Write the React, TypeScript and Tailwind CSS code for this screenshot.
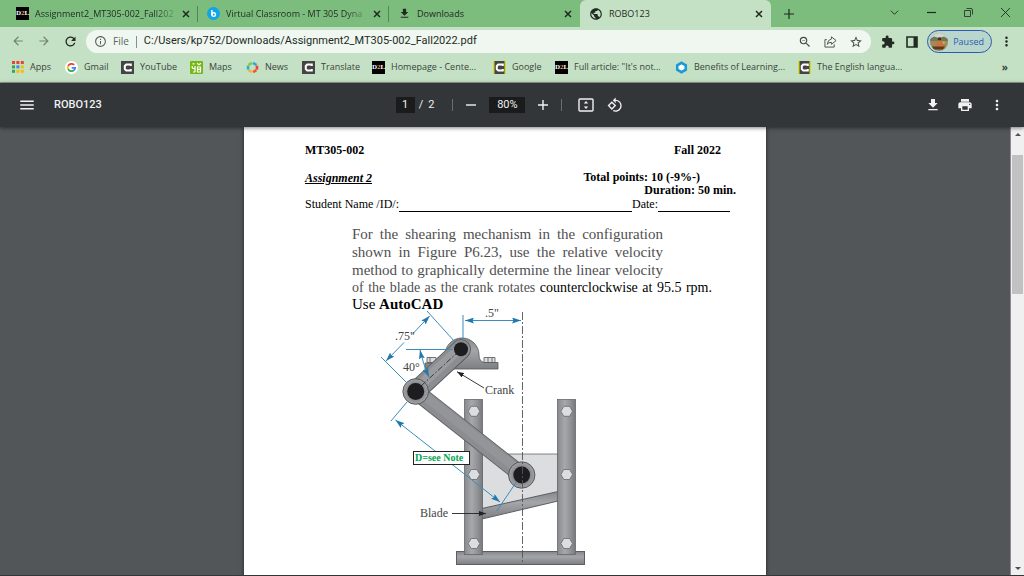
import type { ReactNode } from 'react'
import {
  MdArrowBack,
  MdArrowForward,
  MdInfoOutline,
  MdMenu,
  MdMoreVert,
  MdPrint,
  MdPublic,
  MdRefresh,
  MdRotate90DegreesCcw,
  MdStarBorder,
  MdZoomOut,
} from 'react-icons/md'

const DOWNLOAD_PATH = 'M19 9h-4V3H9v6H5l7 7 7-7zM5 18v2h14v-2H5z'
const EXTENSION_PATH =
  'M20.5 11H19V7c0-1.1-.9-2-2-2h-4V3.5a2.5 2.5 0 0 0-5 0V5H4c-1.1 0-2 .9-2 2v3.8h1.5a2.7 2.7 0 0 1 0 5.4H2V20c0 1.1.9 2 2 2h3.8v-1.5a2.7 2.7 0 0 1 5.4 0V22H17c1.1 0 2-.9 2-2v-4h1.5a2.5 2.5 0 0 0 0-5z'

function DownloadIcon({ className }: { className: string }) {
  return (
    <svg viewBox="0 0 24 24" fill="currentColor" className={className}>
      <path d={DOWNLOAD_PATH} />
    </svg>
  )
}

function D2LIcon() {
  return (
    <span className="flex size-[13px] shrink-0 items-center justify-center bg-black font-['Liberation_Serif',serif] text-[7px] leading-none font-bold text-white">
      D<span className="text-[#f2a25c]">2</span>L
    </span>
  )
}

function CIcon({ accent = false }: { accent?: boolean }) {
  return (
    <svg viewBox="0 0 13 13" className="size-[13px] shrink-0">
      <rect width="13" height="13" fill={accent ? '#d6dc2c' : '#444'} />
      <rect x={accent ? 1.5 : 0} width={accent ? 10 : 13} height="13" fill="#444" />
      <path d="M9.8 5V3.5H5.3L3.8 5v3l1.5 1.6h4.5V8" fill="none" stroke="#fff" strokeWidth="2" />
    </svg>
  )
}

function AppsIcon() {
  const colors = ['#e94335', '#e94335', '#e94335', '#34a853', '#4285f4', '#fbbc05', '#34a853', '#fbbc05', '#fbbc05']
  return (
    <svg viewBox="0 0 12 12" className="size-3 shrink-0">
      {colors.map((c, i) => (
        <rect key={i} x={(i % 3) * 4.4} y={Math.floor(i / 3) * 4.4} width="3" height="3" fill={c} />
      ))}
    </svg>
  )
}

function GoogleIcon() {
  return (
    <svg viewBox="0 0 14 14" className="size-[13px] shrink-0">
      <circle cx="7" cy="7" r="7" fill="#fff" />
      <g fill="none" strokeWidth="1.9">
        <path d="M9.9 4.2A4 4 0 0 0 3.4 5.3" stroke="#ea4335" />
        <path d="M3.4 5.3a4 4 0 0 0 0 3.4" stroke="#fbbc05" />
        <path d="M3.4 8.7a4 4 0 0 0 6.2 1.3" stroke="#34a853" />
        <path d="M9.6 10A4 4 0 0 0 11 7.3H7.2" stroke="#4285f4" />
      </g>
    </svg>
  )
}

function MapsIcon() {
  return (
    <svg viewBox="0 0 13 13" className="size-[13px] shrink-0">
      <rect width="13" height="13" rx="1" fill="#74b816" />
      <g fill="none" stroke="#fff" strokeWidth="1.2">
        <path d="M2.2 5v1.5q0 1 1.300 1H5V5M5 7.500V11M3 11h2" />
        <path d="M7.500 6h3v5h-3zM7.500 8.300h3" />
        <path d="M2.500 2.800h2M7 2.300l2 1.500 2-1.500" />
      </g>
    </svg>
  )
}

function NewsIcon() {
  return (
    <svg viewBox="0 0 14 14" className="size-[13px] shrink-0">
      <g fill="none" strokeWidth="2.8">
        <path d="M2.6 4.3 6.4 2" stroke="#8bc53f" />
        <path d="M7.6 2l3.8 2.3" stroke="#2aa9e0" />
        <path d="M11.8 5v4.3" stroke="#ef4136" />
        <path d="M11.2 9.8 7.6 12" stroke="#f15a29" />
        <path d="M6.4 12 2.6 9.8" stroke="#fbb040" />
        <path d="M2.2 9.3V5" stroke="#27b3c9" />
      </g>
    </svg>
  )
}

function BenefitsIcon() {
  return (
    <svg viewBox="0 0 14 14" className="size-[13px] shrink-0">
      <path d="M7 2 11.6 4.6v4.8L7 12 2.4 9.4V4.6z" fill="#fff" stroke="#1c9ad6" strokeWidth="2.8" />
    </svg>
  )
}

function BrightspaceIcon() {
  return (
    <svg viewBox="0 0 13 13" className="size-[13px] shrink-0">
      <circle cx="6.5" cy="6.5" r="6.5" fill="#0ea5e9" />
      <path d="M4.9 3v5.2" stroke="#fff" strokeWidth="1.5" />
      <circle cx="6.7" cy="7.6" r="1.8" fill="none" stroke="#fff" strokeWidth="1.4" />
    </svg>
  )
}

function Avatar() {
  return (
    <svg viewBox="0 0 18 18" className="size-[18px] shrink-0">
      <defs>
        <clipPath id="avatar">
          <circle cx="9" cy="9" r="9" />
        </clipPath>
      </defs>
      <g clipPath="url(#avatar)">
        <rect width="18" height="18" fill="#a08a5c" />
        <rect width="18" height="5" fill="#d3d8d3" />
        <path d="M0 6 4 3.5 9 5l5-1.500 4 2.500v2H0z" fill="#6d7a58" />
        <circle cx="9.500" cy="6" r="1.800" fill="#4a2c1c" />
        <path d="M8 7.500h3.500l1 3 2.500 2-2 1.500H5l1-3z" fill="#c8743a" />
        <path d="M2 13.500h13l-2 3H4z" fill="#5c3a22" />
        <path d="m12.500 8.500 3 1-2 1.500z" fill="#e6b45c" />
      </g>
    </svg>
  )
}

type TabProps = { icon: ReactNode; title: string; active?: boolean; divider?: boolean }

function Tab({ icon, title, active, divider }: TabProps) {
  return (
    <div
      className={`flex h-full w-[191px] items-center gap-[6px] pr-[7px] pl-[9px] ${
        active ? 'rounded-t-md bg-[#c5e1c5]' : ''
      }`}
    >
      {icon}
      <span
        className={`flex-1 whitespace-nowrap ${
          divider ? '[mask-image:linear-gradient(to_right,black_85%,rgba(0,0,0,0.2))]' : ''
        }`}
      >
        {title}
      </span>
      <button aria-label={`Close ${title}`} className="flex">
        <svg viewBox="0 0 10 10" className="size-[10px]" stroke="currentColor" strokeWidth="1.5">
          <path d="m2 2 6 6M8 2 2 8" />
        </svg>
      </button>
      {divider && <span className="-mr-[7px] h-4 w-px bg-[#4e8a50]" />}
    </div>
  )
}

function TabStrip() {
  return (
    <div className="flex h-[27px] items-center bg-[#7cbc7d] pl-[7px] text-[9px] text-[#1f2a20]">
      <Tab icon={<D2LIcon />} title="Assignment2_MT305-002_Fall202" divider />
      <Tab icon={<BrightspaceIcon />} title="Virtual Classroom - MT 305 Dyna" divider />
      <Tab icon={<DownloadIcon className="size-[13px] shrink-0" />} title="Downloads" />
      <Tab icon={<MdPublic className="size-[14px] shrink-0" />} title="ROBO123" active />
      <button aria-label="New tab" className="ml-[6px] flex size-6 items-center justify-center">
        <svg viewBox="0 0 10 10" className="size-[10px]" stroke="currentColor" strokeWidth="1.2">
          <path d="M5 0v10M0 5h10" />
        </svg>
      </button>
      <div className="mb-[3px] ml-auto flex">
        <button aria-label="Search tabs" className="flex w-[37px] justify-center">
          <svg viewBox="0 0 10 10" className="size-[9px]" fill="none" stroke="currentColor">
            <path d="m1 3 4 4 4-4" />
          </svg>
        </button>
        <button aria-label="Minimize" className="flex w-[37px] justify-center">
          <svg viewBox="0 0 9 9" className="size-[9px]" stroke="currentColor" strokeWidth="1.2">
            <path d="M0 4.5h9" />
          </svg>
        </button>
        <button aria-label="Restore" className="flex w-[37px] justify-center">
          <svg viewBox="0 0 9 9" className="size-[9px]" fill="none" stroke="currentColor" strokeWidth=".8">
            <path d="M.5 2.5h6v6h-6zM2.5.5h4.5q1.5 0 1.5 1.5v4.5" />
          </svg>
        </button>
        <button aria-label="Close window" className="flex w-[37px] justify-center">
          <svg viewBox="0 0 9 9" className="size-[9px]" stroke="currentColor" strokeWidth=".9">
            <path d="m0 0 9 9M9 0 0 9" />
          </svg>
        </button>
      </div>
    </div>
  )
}

function AddressBar() {
  return (
    <div className="flex h-[29px] items-center bg-[#c5e1c5] pr-[10px] pl-[11px] text-[#222b23]">
      <div className="flex gap-3">
        <button aria-label="Back" className="flex text-[#73866f]">
          <MdArrowBack className="size-[14px]" />
        </button>
        <button aria-label="Forward" className="flex text-[#73866f]">
          <MdArrowForward className="size-[14px]" />
        </button>
        <button aria-label="Reload" className="flex">
          <MdRefresh className="size-[15px]" />
        </button>
      </div>
      <div className="ml-2 flex h-[23px] flex-1 items-center rounded-full bg-[#f0f7f0] px-2">
        <MdInfoOutline className="size-[13px] text-[#5c665d]" />
        <span className="ml-[6px] text-[10px] text-[#5c665d]">File</span>
        <span className="mx-[7px] h-3 w-px bg-[#87918a]" />
        <input
          aria-label="Address"
          defaultValue="C:/Users/kp752/Downloads/Assignment2_MT305-002_Fall2022.pdf"
          className="min-w-0 flex-1 bg-transparent font-['Roboto',sans-serif] text-[11px] outline-none"
        />
        <div className="flex items-center gap-3 text-[#434c44]">
          <button aria-label="Zoom" className="flex">
            <MdZoomOut className="size-[14px]" />
          </button>
          <button aria-label="Share" className="flex">
            <svg viewBox="0 0 14 14" className="size-[13px]" fill="none" stroke="currentColor" strokeWidth="1">
              <path d="M3 5H1v8h10v-3M8 2l5 4-5 4V8Q5 7.5 3.5 10 4 5 8 4.3z" />
            </svg>
          </button>
          <button aria-label="Bookmark" className="flex">
            <MdStarBorder className="size-[14px]" />
          </button>
        </div>
      </div>
      <div className="ml-[10px] flex items-center gap-[11px]">
        <button aria-label="Extensions" className="flex">
          <svg viewBox="0 0 24 24" className="size-[14px]" fill="currentColor">
            <path d={EXTENSION_PATH} />
          </svg>
        </button>
        <button aria-label="Side panel" className="flex">
          <svg viewBox="0 0 12 12" className="size-3">
            <path d="M1 1h10v10H1z" fill="none" stroke="currentColor" strokeWidth="1.6" />
            <path d="M7.5 1H11v10H7.5z" fill="currentColor" />
          </svg>
        </button>
        <button className="-ml-[2px] flex h-[23px] items-center gap-[5px] rounded-full border border-[#2a5bb5] bg-[#b8d6cb] pr-[7px] pl-[2px] text-[9px] text-[#2a5bb5]">
          <Avatar />
          Paused
        </button>
        <button aria-label="Menu" className="-ml-1 flex">
          <MdMoreVert className="size-[15px]" />
        </button>
      </div>
    </div>
  )
}

const bookmarks = [
  { label: 'Apps', icon: <AppsIcon />, width: 'w-[53px]' },
  { label: 'Gmail', icon: <GoogleIcon />, width: 'w-[56px]' },
  { label: 'YouTube', icon: <CIcon />, width: 'w-[69px]' },
  { label: 'Maps', icon: <MapsIcon />, width: 'w-[56px]' },
  { label: 'News', icon: <NewsIcon />, width: 'w-[56px]' },
  { label: 'Translate', icon: <CIcon />, width: 'w-[70px]' },
  { label: 'Homepage - Cente...', icon: <D2LIcon />, width: 'w-[121px]' },
  { label: 'Google', icon: <CIcon accent />, width: 'w-[62px]' },
  { label: 'Full article: "It\'s not...', icon: <D2LIcon />, width: 'w-[120px]' },
  { label: 'Benefits of Learning...', icon: <BenefitsIcon />, width: 'w-[123px]' },
  { label: 'The English langua...', icon: <CIcon accent />, width: 'w-[120px]' },
]

function BookmarksBar() {
  return (
    <nav className="flex h-[27px] items-center border-b border-[#8f9c90] bg-[#c5e1c5] pb-1 pl-3 text-[9px] text-[#39443a]">
      {bookmarks.map((b) => (
        <a key={b.label} href="#" className={`flex shrink-0 items-center gap-[6px] whitespace-nowrap ${b.width}`}>
          {b.icon}
          {b.label}
        </a>
      ))}
      <button aria-label="More bookmarks" className="mr-4 ml-auto text-[10px] leading-3 font-bold">
        »
      </button>
    </nav>
  )
}

function PdfToolbar() {
  return (
    <header className="z-10 flex h-11 items-center bg-[#323639] font-['Roboto',sans-serif] text-[11px] text-[#f1f1f1] shadow-[0_1px_4px_rgba(0,0,0,0.5)]">
      <div className="flex flex-1 items-center gap-[18px] pl-[18px]">
        <button aria-label="Outline" className="flex">
          <MdMenu className="size-[18px]" />
        </button>
        <h1 className="font-medium">ROBO123</h1>
      </div>
      <div className="flex items-center pr-1">
        <input aria-label="Page" defaultValue="1" className="h-4 w-[19px] bg-[#191b1c] text-center outline-none" />
        <span className="ml-1 flex gap-[5px]">
          <span>/</span>
          <span>2</span>
        </span>
        <span className="mr-[13px] ml-[18px] h-3 w-px bg-[#6b6e70]" />
        <button aria-label="Zoom out" className="flex">
          <svg viewBox="0 0 10 10" className="size-[10px]" stroke="currentColor" strokeWidth="1.4">
            <path d="M0 5h10" />
          </svg>
        </button>
        <input
          aria-label="Zoom level"
          defaultValue="80%"
          className="mx-[13px] h-4 w-9 bg-[#191b1c] text-center outline-none"
        />
        <button aria-label="Zoom in" className="flex">
          <svg viewBox="0 0 10 10" className="size-[10px]" stroke="currentColor" strokeWidth="1.4">
            <path d="M0 5h10M5 0v10" />
          </svg>
        </button>
        <span className="mr-4 ml-[13px] h-3 w-px bg-[#6b6e70]" />
        <button aria-label="Fit to page" className="flex">
          <svg viewBox="0 0 16 14" className="h-[14px] w-4" fill="none" stroke="currentColor" strokeWidth="1.4">
            <rect x="1" y="1" width="14" height="12" rx="1" />
            <path d="M8 3 10.2 5.6H5.8zM8 11l2.2-2.6H5.8z" fill="currentColor" stroke="none" />
          </svg>
        </button>
        <button aria-label="Rotate" className="ml-[13px] flex">
          <MdRotate90DegreesCcw className="size-4" />
        </button>
      </div>
      <div className="flex flex-1 items-center justify-end gap-4 pr-[19px]">
        <button aria-label="Download" className="flex">
          <DownloadIcon className="size-4" />
        </button>
        <button aria-label="Print" className="flex">
          <MdPrint className="size-4" />
        </button>
        <button aria-label="More actions" className="flex">
          <MdMoreVert className="size-4" />
        </button>
      </div>
    </header>
  )
}

function Nut({ x, y }: { x: number; y: number }) {
  return (
    <path
      transform={`translate(${x} ${y})`}
      d="M-5.8 0-2.9-5H2.9L5.8 0 2.9 5H-2.9z"
      fill="#dcddde"
      stroke="#66686b"
      strokeWidth=".8"
    />
  )
}

// Shearing mechanism, figure P6.23
function MechanismFigure() {
  return (
    <svg viewBox="380 304 220 272" className="-mt-2 ml-[136px] block h-[272px] w-[220px]" role="img">
      <defs>
        <linearGradient id="post">
          <stop offset="0" stopColor="#87898c" />
          <stop offset=".4" stopColor="#a6a8ab" />
          <stop offset=".7" stopColor="#929497" />
          <stop offset="1" stopColor="#77797c" />
        </linearGradient>
        <linearGradient id="base" x2="0" y2="1">
          <stop offset="0" stopColor="#85878a" />
          <stop offset=".4" stopColor="#a3a5a8" />
          <stop offset="1" stopColor="#7d7f82" />
        </linearGradient>
        <radialGradient id="hub">
          <stop offset=".5" stopColor="#7d7f82" />
          <stop offset="1" stopColor="#a3a5a8" />
        </radialGradient>
        <marker id="blue" viewBox="0 0 9 6" refX="9" refY="3" markerWidth="9" markerHeight="6" markerUnits="userSpaceOnUse" orient="auto-start-reverse">
          <path d="M0 0 9 3 0 6 1.5 3z" fill="#2079ad" />
        </marker>
        <marker id="dark" viewBox="0 0 7 5" refX="7" refY="2.5" markerWidth="7" markerHeight="5" markerUnits="userSpaceOnUse" orient="auto">
          <path d="M0 0 7 2.5 0 5z" fill="#222" />
        </marker>
      </defs>

      {/* plate and blade */}
      <path d="M482 454h76v39l-76 16z" fill="#dcddde" stroke="#66686b" strokeWidth=".8" />
      <path d="M482 508.5 558 491.5V501L482 519z" fill="url(#base)" stroke="#5c5e61" />

      {/* frame */}
      <rect x="456.5" y="551.5" width="128" height="13" fill="url(#base)" stroke="#5c5e61" />
      <rect x="464.5" y="399.5" width="18" height="155" fill="url(#post)" stroke="#66686b" strokeWidth=".8" />
      <rect x="557.5" y="399.5" width="18" height="155" fill="url(#post)" stroke="#66686b" strokeWidth=".8" />
      <Nut x={474} y={411.3} />
      <Nut x={474} y={474.5} />
      <Nut x={474} y={543.5} />
      <Nut x={566.7} y={411.3} />
      <Nut x={566.7} y={474.5} />
      <Nut x={566.7} y={543.5} />

      {/* crank mount */}
      <g stroke="#55575a" strokeWidth=".8">
        <path d="M427 357.5h9v5h-9zM430 357.5v5M484 357.5h11v5h-11zM488 357.5v5M492 357.5v5" fill="#dcddde" />
        <path d="M425 363h16q4-2 4-8a17 17 0 0 1 34 0q0 6 5 7.500h14v6.500h-73z" fill="url(#base)" />
      </g>

      {/* connecting rod */}
      <path d="M415.7 391.3 521.7 475" stroke="#5c5e61" strokeWidth="17" />
      <path d="M415.7 391.3 521.7 475" stroke="#8b8d90" strokeWidth="15.4" />
      <path d="M417 390 523 473.7" stroke="#939598" strokeWidth="9" />

      {/* crank */}
      <path d="M415.7 391.3 461 349.3" stroke="#55575a" strokeWidth="20" strokeLinecap="round" />
      <path d="M415.7 391.3 461 349.3" stroke="#8b8d90" strokeWidth="18.4" strokeLinecap="round" />
      <path d="M415 390 460 348.3" stroke="#999b9e" strokeWidth="10" strokeLinecap="round" />
      <circle cx="415.7" cy="391.5" r="12.8" fill="url(#hub)" stroke="#55575a" />
      <circle cx="521.7" cy="475" r="13.2" fill="url(#hub)" stroke="#55575a" />
      <g fill="#1d1c1e">
        <circle cx="461" cy="349.2" r="7" />
        <circle cx="415.7" cy="391.5" r="8.5" />
        <circle cx="521.7" cy="475" r="8.4" />
      </g>
      <path d="M421 386 458 352" stroke="#222" strokeWidth=".8" strokeDasharray="6 2 1.5 2" />
      <path d="M522.5 312V565" stroke="#555" strokeWidth=".9" strokeDasharray="8 2 2 2" />

      {/* dimensions */}
      <g fill="none" stroke="#3a8dbd" strokeWidth="1">
        <path d="M463 315v24M427 311l28 31M381 357l26 26M406 349.5h47M407 402l-16 19M515.7 483l-19 28" />
        <path d="M465 320.5h56" markerStart="url(#blue)" markerEnd="url(#blue)" />
        <path d="M412 334.5 429.7 316" markerEnd="url(#blue)" />
        <path d="M404 342.5 386 361" markerEnd="url(#blue)" />
        <path d="M420 350q3 14 9 27" markerStart="url(#blue)" markerEnd="url(#blue)" />
        <path d="M395.5 420 500 502" markerStart="url(#blue)" markerEnd="url(#blue)" />
      </g>
      <path d="M484 388 457 371.7" stroke="#222" strokeWidth=".9" markerEnd="url(#dark)" />
      <path d="M452 513.5h34" stroke="#222" strokeWidth=".9" markerEnd="url(#dark)" />

      <g fill="#444" className="font-['Liberation_Serif',serif] text-[12px]">
        <text x="485" y="317">.5"</text>
        <text x="395" y="340">.75"</text>
        <text x="403" y="371">40°</text>
        <text x="485" y="394">Crank</text>
        <text x="420" y="517">Blade</text>
      </g>
      <rect x="413.5" y="451.5" width="56" height="13" fill="#fff" stroke="#222" />
      <text x="415" y="461" fill="#00a650" className="font-['Liberation_Serif',serif] text-[10px] font-bold">
        D=see Note
      </text>
    </svg>
  )
}

function Document() {
  return (
    <article className="mx-auto w-[522px] bg-white pt-4 font-['Liberation_Serif',serif] text-xs text-black shadow-[0_0_4px_rgba(0,0,0,0.6)]">
      <div className="pr-[30px] pl-[61px] leading-[14px]">
        <div className="flex justify-between pr-[15px] font-bold">
          <span>MT305-002</span>
          <span>Fall 2022</span>
        </div>
        <div className="mt-[14px] flex justify-between font-bold">
          <h2 className="italic underline">Assignment 2</h2>
          <div className="text-right leading-[13px]">
            <p className="pr-9">Total points: 10 (-9%-)</p>
            <p>Duration: 50 min.</p>
          </div>
        </div>
        <div className="flex pr-[6px] leading-[15px]">
          <span>Student Name /ID/:</span>
          <span className="flex-1 border-b border-black" />
          <span>Date:</span>
          <span className="w-[72px] border-b border-black" />
        </div>
      </div>
      <div className="mt-[13px] ml-[108px] text-[15px] leading-[18px] whitespace-nowrap text-[#505050]">
        <div className="w-[311px] [text-align-last:justify]">
          <p>For the shearing mechanism in the configuration</p>
          <p>shown in Figure P6.23, use the relative velocity</p>
          <p>method to graphically determine the linear velocity</p>
        </div>
        <p className="w-[360px] text-sm leading-[18px] [text-align-last:justify]">
          of the blade as the crank rotates <span className="text-black">counterclockwise at 95.5 rpm.</span>
        </p>
        <p className="leading-[15px] text-black">
          Use <b>AutoCAD</b>
        </p>
      </div>
      <MechanismFigure />
    </article>
  )
}

function Scrollbar() {
  return (
    <div className="flex w-[14px] flex-col items-center border-l border-[#8a8c8e] bg-[#f0f0f0]">
      <svg viewBox="0 0 6 3" className="mt-[6px] h-[3px] w-[6px]">
        <path d="M0 3 3 0l3 3z" fill="#505050" />
      </svg>
      <div className="mt-[19px] h-[31%] w-[11px] bg-[#c1c1c1]" />
      <svg viewBox="0 0 6 3" className="mt-auto mb-[5px] h-[3px] w-[6px]">
        <path d="m0 0 3 3 3-3z" fill="#505050" />
      </svg>
    </div>
  )
}

export default function App() {
  return (
    <div className="flex h-screen flex-col overflow-hidden bg-[#525659] font-['Open_Sans',sans-serif]">
      <TabStrip />
      <AddressBar />
      <BookmarksBar />
      <PdfToolbar />
      <main className="flex min-h-0 flex-1 border-b border-[#323639]">
        <div className="flex-1 overflow-hidden">
          <Document />
        </div>
        <Scrollbar />
      </main>
    </div>
  )
}
